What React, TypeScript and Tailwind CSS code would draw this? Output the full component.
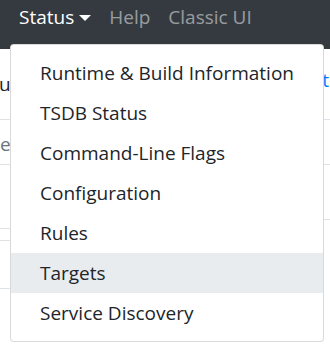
const items = [
  'Runtime & Build Information',
  'TSDB Status',
  'Command-Line Flags',
  'Configuration',
  'Rules',
  'Targets',
  'Service Discovery',
];

export default function App() {
  return (
    <div className="relative h-[348px] w-[330px] overflow-hidden bg-white font-['Open_Sans',sans-serif] text-[#212529]">
      <nav className="flex h-[49px] items-start gap-[18px] bg-[#343a40] pl-[19px] pt-[3px] text-[19px] leading-[28px]">
        <span className="flex items-center gap-[5px] text-white">
          Status
          <span className="mt-[1px] h-0 w-0 border-x-[6px] border-t-[6px] border-x-transparent border-t-white" />
        </span>
        <span className="text-white/50">Help</span>
        <span className="text-white/50">Classic UI</span>
      </nav>

      {/* page content behind the open menu */}
      <div className="flex justify-between text-[19px]">
        <div className="w-[30px]">
          <div className="-ml-[1px] mt-[22px] leading-[27px]">ue</div>
          <div className="mt-[21px] border-t border-[#dee2e6]" />
          <div className="mt-[12px] leading-[24px] text-[#6c757d]">e</div>
          <div className="mt-[8px] border-t border-[#dee2e6]" />
          <div className="mt-[63px] border-t border-[#dee2e6]" />
          <div className="mt-[11px] border-t border-[#dee2e6]" />
          <div className="mt-[47px] border-t border-[#dee2e6]" />
        </div>
        <div className="w-[20px] text-right">
          <div className="mt-[18px] pr-[1px] leading-[27px] text-[#007bff]">t</div>
          <div className="mt-[25px] border-t border-[#dee2e6]" />
          <div className="mt-[44px] border-t border-[#dee2e6]" />
          <div className="mt-[54px] border-t border-[#dee2e6]" />
        </div>
      </div>

      <div className="absolute left-[10px] top-[44px] w-[314px] rounded-[4px] border border-black/15 bg-white py-[8px] text-[19px]">
        {items.map((item) => (
          <div
            key={item}
            className={`flex h-[40px] items-center pl-[29px] leading-[27px] text-[#212529] ${item === 'Targets' ? 'bg-[#e9ecef]' : ''}`}
          >
            {item}
          </div>
        ))}
      </div>
    </div>
  );
}
